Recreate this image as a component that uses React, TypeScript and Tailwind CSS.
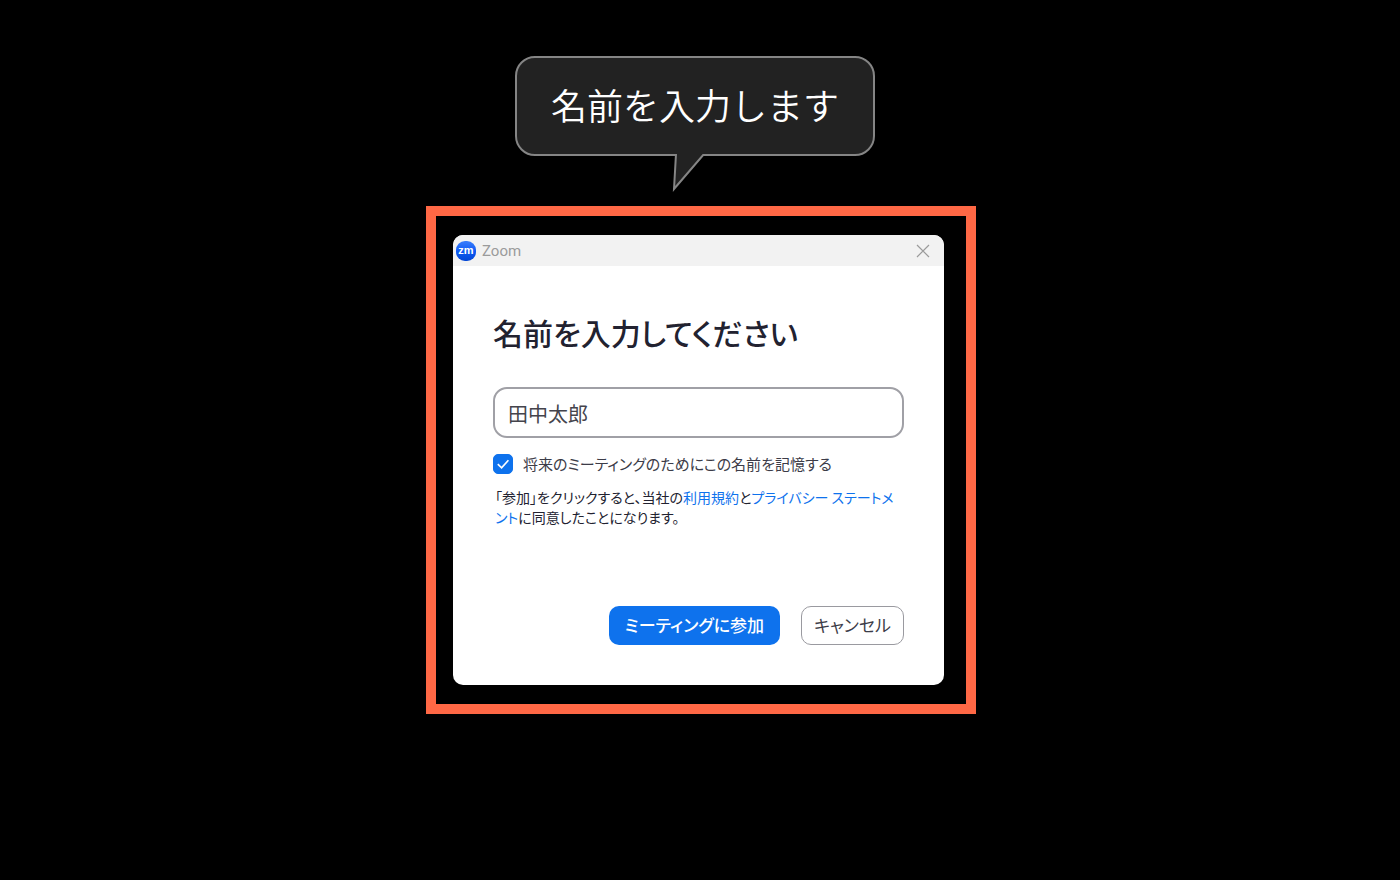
import { useState } from 'react'

function SpeechBubble({ text }: { text: string }) {
    return (
        <div className="relative mr-3 flex h-[100px] items-center rounded-[20px] border-2 border-[#858585] bg-[#222222] px-[34px] pb-1">
            <p className="text-4xl font-[350] text-white">{text}</p>
            {/* 吹き出しのしっぽ */}
            <svg className="absolute top-full left-[155px]" width="36" height="40" viewBox="0 0 36 40" fill="none">
                <path d="M4 0 L2 35 L32 0 Z" fill="#222222" />
                <path d="M4 0 L2 35 L32 0" stroke="#858585" strokeWidth="2" />
            </svg>
        </div>
    )
}

function TitleBar() {
    return (
        <header className="flex h-[31px] items-center justify-between bg-[#f2f2f2] pr-3.5 pl-[3px]">
            <div className="flex items-center gap-1.5">
                <span className="flex size-5 items-center justify-center rounded-[9px] bg-linear-to-b from-[#3a7dfb] via-[#0f5bf5] to-[#0446d4] pb-px font-['Liberation_Sans',sans-serif] text-[11px] leading-none font-bold text-white">
                    zm
                </span>
                <span className="font-['Roboto',sans-serif] text-[15px] leading-5 text-[#9b9b9b]">Zoom</span>
            </div>
            <button type="button" aria-label="閉じる">
                <svg width="14" height="14" viewBox="0 0 14 14" fill="none" stroke="#9b9b9b" strokeWidth="1.2">
                    <path d="M1 1 L13 13 M13 1 L1 13" />
                </svg>
            </button>
        </header>
    )
}

function JoinDialog() {
    const [name, setName] = useState('田中太郎')
    const [remember, setRemember] = useState(true)

    return (
        <section className="overflow-hidden rounded-[10px] bg-white [font-feature-settings:'palt']">
            <TitleBar />
            <form className="px-10 pt-[46px] pb-10" onSubmit={(e) => e.preventDefault()}>
                <h1 className="text-3xl leading-10 font-medium text-[#222230]">
                    <label htmlFor="display-name">名前を入力してください</label>
                </h1>
                <input
                    id="display-name"
                    type="text"
                    value={name}
                    onChange={(e) => setName(e.target.value)}
                    className="mt-[35px] block h-[51px] w-full rounded-[14px] border-2 border-[#a0a0a6] px-[13px] pt-0.5 text-xl text-[#44444c] outline-none"
                />

                <div className="mt-4 flex items-center gap-2.5">
                    <div className="relative size-5">
                        <input
                            id="remember"
                            type="checkbox"
                            checked={remember}
                            onChange={(e) => setRemember(e.target.checked)}
                            className="block size-5 appearance-none rounded-[5px] border border-[#a0a0a6] checked:border-[#0e72ed] checked:bg-[#0e72ed]"
                        />
                        {remember && (
                            <svg className="pointer-events-none absolute inset-0" width="20" height="20" viewBox="0 0 20 20" fill="none" stroke="white" strokeWidth="1.7">
                                <path d="M4.8 10.2 L8.6 13.8 L15.4 6.2" />
                            </svg>
                        )}
                    </div>
                    <label htmlFor="remember" className="text-[15px] leading-5 text-[#3c3c48]">
                        将来のミーティングのためにこの名前を記憶する
                    </label>
                </div>

                <p className="mt-[13px] pl-0.5 text-sm leading-5 text-[#222230]">
                    「参加」をクリックすると、当社の
                    <a href="#terms" className="text-[#0e72ed]">利用規約</a>と
                    <a href="#privacy" className="text-[#0e72ed]">プライバシー ステートメント</a>
                    に同意したことになります。
                </p>

                <div className="mt-[79px] flex justify-end gap-[21px]">
                    <button type="submit" className="h-[39px] rounded-[10px] bg-[#0e72ed] px-4 pb-0.5 text-[17px] font-medium text-white">
                        ミーティングに参加
                    </button>
                    <button type="button" className="h-[39px] rounded-[10px] border border-[#9a9aa0] px-3 pb-0.5 text-[17px] text-[#3c3c48]">
                        キャンセル
                    </button>
                </div>
            </form>
        </section>
    )
}

export default function App() {
    return (
        <main
            lang="ja"
            className="flex min-h-screen flex-col items-center bg-black pt-14 pb-6 pl-0.5 font-['Noto_Sans_CJK_JP',sans-serif]"
        >
            <SpeechBubble text="名前を入力します" />
            <div className="mt-[50px] w-full max-w-[550px] border-10 border-[#ff6845] pt-[19px] pr-[22px] pb-[19px] pl-[17px]">
                <JoinDialog />
            </div>
        </main>
    )
}
